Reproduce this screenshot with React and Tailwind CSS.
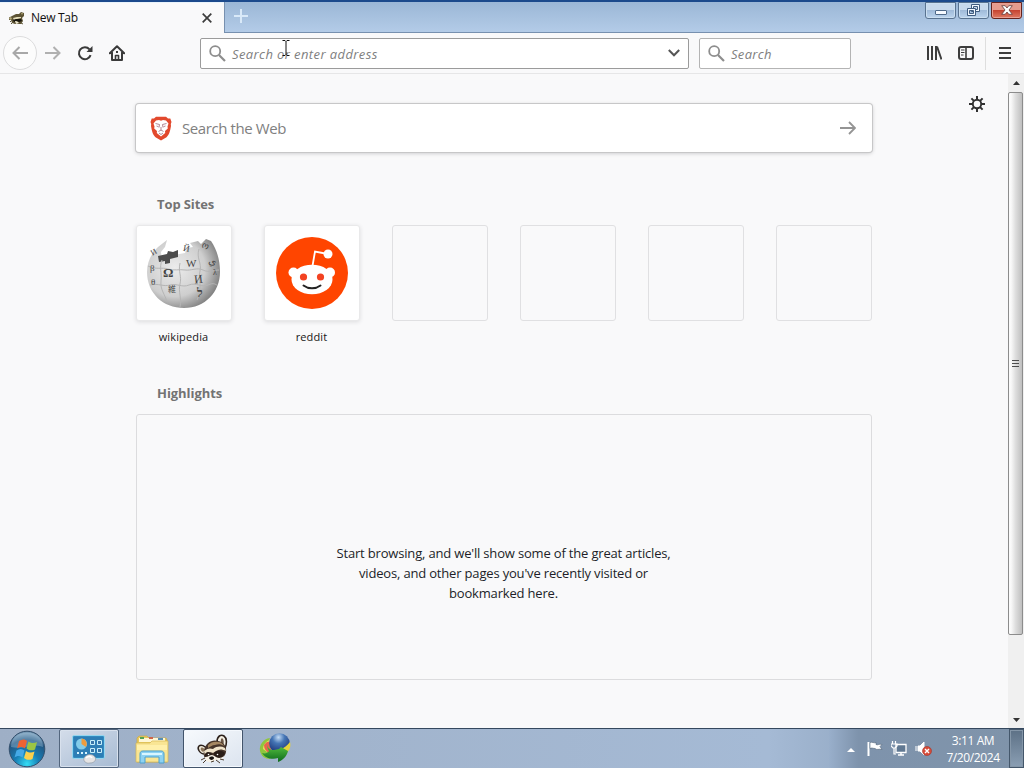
import React from "react";

const FONT = "font-['Open_Sans','Noto_Sans',sans-serif]";

function Raccoon({ className }) {
  return (
    <svg viewBox="0 0 34 30" className={className}>
      <path d="M21 8C21 2 25 0 28 2s3 8 1 12z" fill="#f3eee2" stroke="#2c211b" strokeWidth="1.600" />
      <path d="M25 9c-1-4 1-6 2-4s1 4 0 6z" fill="#6b5645" />
      <path d="M9 20C3 20 1 14 3 12s6 0 8 3z" fill="#efe8d8" stroke="#2c211b" strokeWidth="1.500" />
      <path d="M5 14c1-1 3 0 4 2l-2 2c-2-1-3-3-2-4z" fill="#8b7459" />
      <path d="M8 17C9 9 16 5 22 7c6 1 9 6 8 11-1 5-4 6-8 7l-9 1c-5-1-6-5-5-9z" fill="#46342a" />
      <path d="M12 11c3-3 7-4 10-3 3 0 5 2 6 4-3-2-6-2-9-1-3 0-5 2-7 3z" fill="#a58762" />
      <path d="M8 17c4-3 6-3 9-2 4-3 8-3 12-1l1 3c-4-2-7-2-10 0l-3 2c-3-1-6 0-8 2z" fill="#f0e4ca" />
      <path d="M9 20c2-3 6-2 7 0l-1 3-6 1zM18 19c3-3 8-3 11 0-1 3-4 5-7 5-2 0-4-2-4-5z" fill="#2a1d17" />
      <path d="M9 23c3 0 5-2 7-2s4 3 7 3c2 0 4-1 5-2-1 3-4 4-7 4l-7 2c-3 0-5-2-5-5z" fill="#f7f1e5" />
      <circle cx="12.500" cy="20.500" r=".8" fill="#fff" />
      <circle cx="21.500" cy="20.500" r=".8" fill="#fff" />
      <path d="M13 24c1-2 5-2 5 0s-4 3-5 0z" fill="#171210" />
      <path d="M9 24l-4 2M10 26l-3 3M20 26l4 3M24 25l4 1M15 28l3-1" stroke="#4a3a2c" strokeWidth="1" />
    </svg>
  );
}

function TabRaccoon() {
  return (
    <svg viewBox="0 0 16 14" className="h-[14px] w-[16px]">
      <path d="M3 5l4-2 3 0 2-2 3 1 0 3-2 2 1 3-2 3-3 0-3 0-3-1-1-3-2 0-1-2z" fill="#5c5334" />
      <path d="M0 7l2-1 1 2-2 1zM12 2l2 0-1 2z" fill="#b5ab78" />
      <path d="M4 7l4-1 4 0 0 1-4 1-3 1z" fill="#e6dfbd" />
      <path d="M4 9l3-1 5 0 1 2-3 1-2-1-3 1z" fill="#17150d" />
      <path d="M6 10l1 0 2 1 1 1-3 1z" fill="#eee8cf" />
      <path d="M2 10l-1 1M3 12l-1 1M12 12l2 1" stroke="#5c5334" />
    </svg>
  );
}

function Magnifier({ className }) {
  return (
    <svg viewBox="0 0 17 17" className={className} fill="none" stroke="#8d8d8d">
      <circle cx="6.2" cy="6.2" r="5" strokeWidth="1.8" />
      <path d="M10 10l6 6" strokeWidth="2.2" />
    </svg>
  );
}

function TitleBar() {
  return (
    <div className="flex h-[33px] shrink-0 border-t-2 border-[#1c4a8c] bg-linear-to-b from-[#9bb7d6] to-[#b4cce8]">
      <div className="flex h-[31px] w-[224px] items-center border-t border-[#e9f3fb] bg-[#f9f9fa] pr-[12px] pl-[9px]">
        <TabRaccoon />
        <span className="ml-[6px] text-[12px] leading-[16px] tracking-[-0.3px] text-[#111]">New Tab</span>
        <svg viewBox="0 0 10 10" className="ml-auto size-[10px]" stroke="#3c3c3c" strokeWidth="1.7">
          <path d="M.7.7l8.6 8.6M9.3.7L.7 9.3" />
        </svg>
      </div>
      <div className="flex h-[31px] flex-1 border-b border-l border-[#7790af]">
        <svg viewBox="0 0 14 14" className="mt-[7px] ml-[9px] size-[14px]" stroke="#d9e9f8" strokeWidth="2">
          <path d="M7 0v14M0 7h14" />
        </svg>
        <div className="ml-auto flex gap-[2px] pr-[2px]">
          <div className="flex h-[17px] w-[31px] items-center justify-center rounded-b-[3px] border border-[#597390] bg-linear-to-b from-[#c7d9ec] from-45% via-[#a0bbd9] via-50% to-[#bcd5ee] shadow-[inset_0_0_0_1px_#cbdff1]">
            <div className="mt-[4px] h-[5px] w-[12px] rounded-[1px] border border-[#4f6a89] bg-[#f6faff]" />
          </div>
          <div className="flex h-[17px] w-[31px] items-center justify-center rounded-b-[3px] border border-[#597390] bg-linear-to-b from-[#c7d9ec] from-45% via-[#a0bbd9] via-50% to-[#bcd5ee] shadow-[inset_0_0_0_1px_#cbdff1]">
            <svg viewBox="0 0 13 12" className="mb-px h-[12px] w-[13px]" fill="#f2f8ff" stroke="#405d80">
              <path d="M4.5.5h8v7h-8zM6.5 2.5h4v3h-4z" fillRule="evenodd" />
              <path d="M.5 4.5h8v7h-8zM2.5 6.5h4v3h-4z" fillRule="evenodd" />
            </svg>
          </div>
          <div className="flex h-[17px] w-[31px] items-center justify-center rounded-b-[3px] border border-[#66231d] bg-linear-to-b from-[#e69b8d] from-45% via-[#c64431] via-50% to-[#de7862] shadow-[inset_0_0_0_1px_#e99f92]">
            <svg viewBox="0 0 12 10" className="mb-px h-[10px] w-[12px]">
              <path d="M.7.7h3.500L6 3 7.800.7h3.500L8 5l3.300 4.300H7.800L6 7 4.200 9.300H.7L4 5z" fill="#fff" stroke="#663c3b" strokeWidth=".8" />
            </svg>
          </div>
        </div>
      </div>
    </div>
  );
}

function ToolBar() {
  return (
    <div className="flex h-[41px] shrink-0 items-center border-b border-[#e6e6e7] bg-[#f9f9fa] pl-[3px]">
      <div className="flex size-[34px] items-center justify-center rounded-full border border-[#dcdcdd] bg-[#fcfcfc]">
        <svg viewBox="0 0 16 14" className="h-[14px] w-[16px]" fill="none" stroke="#a8a8a8" strokeWidth="2">
          <path d="M16 7H1.500M7.500 1l-6 6 6 6" />
        </svg>
      </div>
      <svg viewBox="0 0 16 14" className="ml-[8px] h-[14px] w-[16px]" fill="none" stroke="#b0b0b0" strokeWidth="2">
        <path d="M0 7h14.500M8.500 1l6 6-6 6" />
      </svg>
      <svg viewBox="0 0 16 16" className="ml-[16px] size-[16px]" fill="none" stroke="#3a3a3a" strokeWidth="2">
        <path d="M13.600 10.200A6 6 0 1 1 12.500 4.300" />
        <path d="M15.500 1v6h-6z" fill="#3a3a3a" stroke="none" />
      </svg>
      <svg viewBox="0 0 16 16" className="ml-[16px] size-[16px]" fill="none" stroke="#3a3a3a" strokeWidth="2" strokeLinejoin="round">
        <path d="M.8 8.300L8 1.200l7.200 7.100M3 7.500V15h10V7.500" strokeLinecap="round" />
        <path d="M6.500 15v-4.500h3V15" strokeWidth="1.600" />
        <path d="M8 6v2" />
      </svg>
      <div className="relative ml-[75px] flex h-[31px] w-[489px] items-center rounded-[2px] border border-[#9b9b9b] bg-white pr-[8px] pl-[8px]">
        <Magnifier className="size-[17px]" />
        <span className="mt-[3px] ml-[6px] text-[13px] tracking-[0.4px] whitespace-nowrap text-[#808080] italic">Search or enter address</span>
        <svg viewBox="0 0 12 8" className="ml-auto h-[8px] w-[12px]" fill="none" stroke="#555" strokeWidth="2">
          <path d="M.8 1L6 6.300 11.200 1" />
        </svg>
        <svg viewBox="0 0 8 16" className="absolute top-[1px] left-[81px] h-[16px] w-[8px]" fill="none" stroke="#111">
          <path d="M.5.5h2.500l1 1 1-1h2.500M4 1.500v13M.5 15.500h2.500l1-1 1 1h2.500" />
        </svg>
      </div>
      <div className="ml-[10px] flex h-[31px] w-[152px] items-center rounded-[2px] border border-[#b4b4b4] bg-white pl-[8px]">
        <Magnifier className="size-[17px]" />
        <span className="mt-[3px] ml-[6px] text-[13px] tracking-[0.3px] text-[#808080] italic">Search</span>
      </div>
      <svg viewBox="0 0 16 14" className="ml-[75px] h-[14px] w-[16px]" stroke="#3d3d3d" strokeWidth="2">
        <path d="M2 0v14M6 0v14M10 0v14M11 .5L15.500 13.500" />
      </svg>
      <svg viewBox="0 0 16 14" className="ml-[16px] h-[14px] w-[16px]" fill="none" stroke="#3d3d3d">
        <rect x="1" y="1" width="14" height="12" rx="2" strokeWidth="2" />
        <path d="M8 1v12" strokeWidth="1.600" />
        <path d="M3 4h3.500M3 6.500h3.500M3 9h2.500" />
      </svg>
      <div className="ml-[11px] h-[33px] w-px bg-[#dedede]" />
      <svg viewBox="0 0 12 12" className="ml-[13px] h-[12px] w-[12px]" stroke="#3d3d3d" strokeWidth="2">
        <path d="M0 1h12M0 6h12M0 11h12" />
      </svg>
    </div>
  );
}

function Lion() {
  return (
    <svg viewBox="0 0 22 25" className="h-[25px] w-[22px]">
      <path d="M6 .8h10l2 1.800 2.300-.2L21.500 6l-.7 2 .2 2c-1 6-2 9-4.500 11.200L11 24.500l-5.500-3.300C3 19 2 16 1 10l.2-2L.5 6l1.200-3.600 2.300.2z" fill="#e2492d" />
      <path d="M6 4.500l3-.5 2 .7 2-.7 3 .5 2.500 3-1 3 .3 2-2.800 2.500.2 2L11 20.500 6.800 17l.2-2-2.800-2.500.3-2-1-3z" fill="#fff" />
      <path d="M5.500 7.500l4 1-.5 3M16.500 7.500l-4 1 .5 3M6.500 10l2 .7M15.500 10l-2 .7M11 11v3.500M8.500 15.500L11 14l2.500 1.500M9 17l2 1.500 2-1.500" fill="none" stroke="#aa7a88" strokeWidth=".9" />
    </svg>
  );
}

function WikiGlobe() {
  return (
    <svg viewBox="0 0 76 74" className="h-[74px] w-[76px]">
      <defs>
        <radialGradient id="globe" cx="38%" cy="42%" r="64%">
          <stop offset="0" stopColor="#ececec" />
          <stop offset=".65" stopColor="#cecece" />
          <stop offset="1" stopColor="#828282" />
        </radialGradient>
      </defs>
      <path d="M12 11l9-7-2 7-4 5 1 8 9-2 3-3 11-2 2-5 6-1-3-4 8-2 3 3 5-5 5 2c6 9 9 19 9 31C74 56 59 72 38 72S1 57 1 36c0-11 5-19 11-25z" fill="url(#globe)" />
      <path d="M12 20l9-2 1-3 5 1 5-2v7l-8 2v4l-5 1v-3l-6 1z" fill="#4c4c4c" />
      <path d="M2 30c8 4 14 1 20 3s11 0 17 1 12-3 18 0 11 0 16 0M4 49c9-2 13 2 20 0s12 3 19 0 13 3 19 0 8 0 9 0M16 24c-3 8 0 12-1 21s4 13 6 21M34 27c-2 9 2 13 0 21s2 14 0 23M53 13c-3 9 3 14 1 22s3 16-3 29" fill="none" stroke="#b5b5b5" strokeWidth="1" />
      <g fill="#444" fontFamily="Liberation Serif, serif">
        <text x="17" y="41" fontSize="13" fontWeight="700">Ω</text>
        <text x="40" y="31" fontSize="11">W</text>
        <text x="48" y="47" fontSize="12" transform="rotate(-6 52 42)">И</text>
        <text x="22" y="56" fontSize="8" fontFamily="Noto Sans CJK JP, sans-serif">維</text>
        <text x="51" y="61" fontSize="12" fontWeight="700">ל</text>
        <text x="64" y="27" fontSize="10" transform="rotate(20 64 20)">ي</text>
        <text x="37" y="15" fontSize="9" transform="rotate(10 38 14)">Й</text>
        <text x="6" y="20" fontSize="8" transform="rotate(-30 6 19)">И</text>
        <text x="4" y="35" fontSize="9">β</text>
        <text x="5" y="49" fontSize="9">θ</text>
        <text x="56" y="12" fontSize="9" transform="rotate(25 58 9)">ო</text>
        <text x="67" y="39" fontSize="8">λ</text>
      </g>
    </svg>
  );
}

function RedditLogo() {
  return (
    <svg viewBox="0 0 72 72" className="size-[72px]">
      <circle cx="36" cy="36" r="36" fill="#ff4500" />
      <path d="M36.500 29l2.500-14.500 13 2.500" fill="none" stroke="#fff" strokeWidth="1.800" />
      <circle cx="52" cy="17" r="4.500" fill="#fff" />
      <circle cx="17.500" cy="35.500" r="5" fill="#fff" />
      <circle cx="54" cy="35.500" r="5" fill="#fff" />
      <ellipse cx="36" cy="42.500" rx="20.500" ry="14.800" fill="#fff" />
      <circle cx="27.500" cy="40" r="3.600" fill="#f34221" />
      <circle cx="44.500" cy="40" r="3.600" fill="#f34221" />
      <path d="M27.500 48.500c5 3.800 12 3.800 17 0" fill="none" stroke="#242424" strokeWidth="2" strokeLinecap="round" />
    </svg>
  );
}

function Site({ name, children }) {
  return (
    <div className="flex w-[96px] flex-col items-center">
      <div
        className={
          children
            ? "flex size-[96px] items-center justify-center rounded-[3px] border border-[#e9e9ea] bg-white shadow-[0_1px_4px_#dcdcde]"
            : "size-[96px] rounded-[3px] border border-[#e0e0e2]"
        }
      >
        {children}
      </div>
      {name && <span className="mt-[8px] mr-px text-[11px] leading-[16px] tracking-[0.15px] text-[#171717]">{name}</span>}
    </div>
  );
}

function NewTabPage() {
  return (
    <div className="flex min-w-0 flex-1">
      <main className="ml-[136px] w-[736px] pt-[30px]">
        <div className="flex h-[48px] items-center rounded-[3px] bg-white pr-[16px] pl-[14px] shadow-[0_0_0_1px_#c7c7c8,0_1px_4px_#bdbdbf]">
          <Lion />
          <span className="ml-[10px] text-[15px] tracking-[-0.4px] text-[#808080]">Search the Web</span>
          <svg viewBox="0 0 16 14" className="ml-auto h-[14px] w-[16px]" fill="none" stroke="#949494" strokeWidth="1.800">
            <path d="M0 7h15M9 1l6 6-6 6" />
          </svg>
        </div>
        <h2 className="mt-[42px] ml-[21px] text-[13px] leading-[20px] font-bold tracking-[-0.1px] text-[#737373]">Top Sites</h2>
        <div className="mt-[11px] flex h-[120px] gap-[32px]">
          <Site name="wikipedia"><WikiGlobe /></Site>
          <Site name="reddit"><RedditLogo /></Site>
          <Site />
          <Site />
          <Site />
          <Site />
        </div>
        <h2 className="mt-[38px] ml-[21px] text-[13px] leading-[20px] font-bold tracking-[-0.05px] text-[#737373]">Highlights</h2>
        <div className="mt-[11px] flex h-[266px] justify-center rounded-[3px] border border-[#dcdcde] pt-[128px]">
          <p className="mr-px text-center text-[13px] leading-[20px] tracking-[-0.175px] whitespace-nowrap text-[#211e28]">
            Start browsing, and we'll show some of the great articles,<br />
            videos, and other pages you've recently visited or<br />
            bookmarked here.
          </p>
        </div>
      </main>
      <svg viewBox="0 0 16 16" className="mt-[22px] ml-[97px] size-[16px]" fill="none" stroke="#303030">
        <circle cx="8" cy="8" r="4.200" strokeWidth="1.900" />
        <path d="M8 0v3.500M8 12.500V16M0 8h3.500M12.500 8H16M2.400 2.400l2.500 2.500M11.100 11.100l2.500 2.500M13.600 2.400l-2.500 2.500M4.900 11.100l-2.500 2.500" strokeWidth="2" />
      </svg>
    </div>
  );
}

function ScrollBar() {
  return (
    <div className="flex w-[16px] flex-col bg-[#f0f0f0]">
      <div className="flex h-[18px] items-center justify-center">
        <svg viewBox="0 0 7 4" className="h-[4px] w-[7px]"><path d="M0 4l3.500-4L7 4z" fill="#333" /></svg>
      </div>
      <div className="flex h-[543px] w-[15px] items-center justify-center rounded-[2px] border border-[#8c8c8c] bg-linear-to-r from-[#fafafa] from-15% via-[#dedede] via-50% to-[#bfbfbf]">
        <div className="mr-px flex flex-col gap-[2px]">
          <div className="h-px w-[7px] bg-[#4d4d4d]" />
          <div className="h-px w-[7px] bg-[#4d4d4d]" />
          <div className="h-px w-[7px] bg-[#4d4d4d]" />
        </div>
      </div>
      <div className="mt-auto flex h-[17px] items-center justify-center">
        <svg viewBox="0 0 7 4" className="h-[4px] w-[7px]"><path d="M0 0l3.500 4L7 0z" fill="#333" /></svg>
      </div>
    </div>
  );
}

function StartOrb() {
  return (
    <svg viewBox="0 0 38 38" className="size-[38px]">
      <defs>
        <radialGradient id="orb" cx="50%" cy="92%" r="85%">
          <stop offset="0" stopColor="#35ddf5" />
          <stop offset=".4" stopColor="#177eb5" />
          <stop offset=".8" stopColor="#235681" />
          <stop offset="1" stopColor="#6d92b0" />
        </radialGradient>
      </defs>
      <circle cx="19" cy="19" r="17.800" fill="url(#orb)" stroke="#34506d" strokeWidth="1" />
      <path d="M3 17C3 8 10 2.500 19 2.500S35 8 35 17c-9-4-21 3-32 0z" fill="#d9efff" opacity=".28" />
      <path d="M11 11c3-2 6-2 8 0l-2 7.500c-3-2-5-2-8 0z" fill="#ed6332" />
      <path d="M20.500 11.500c3 2 6 2 8.500.5l-2 7.500c-3 1.500-6 1-8.500-1z" fill="#9bc544" />
      <path d="M8.500 20.500c3-2 5.500-2 8 0l-2 7c-3-2-5-2-8 0z" fill="#45a9e6" />
      <path d="M18 21c3 2 5.500 2 8.500.5l-2 7.500c-3 1.500-6 1-8.500-1z" fill="#fbd04c" />
    </svg>
  );
}

function ControlPanel() {
  return (
    <svg viewBox="0 0 33 29" className="h-[29px] w-[33px]">
      <rect x=".5" y=".5" width="32" height="23" rx="1.500" fill="#318bc1" stroke="#93d5ee" />
      <rect x="2" y="2" width="29" height="20" fill="#2d7eb5" />
      <circle cx="9.500" cy="9" r="5.500" fill="#83cce9" />
      <path d="M9.500 9V3.500A5.500 5.500 0 0 1 14 12z" fill="#ee9c3d" />
      <path d="M5 18h2M9 18h2M13 18h2" stroke="#d6f5ff" strokeWidth="2" />
      <g fill="#3976aa" stroke="#c6f0fb">
        <path d="M18.500 5.500h4v4h-4zM25.500 5.500h4v4h-4zM18.500 13.500h4v4h-4zM25.500 13.500h4v4h-4z" />
      </g>
      <path d="M12 23c2-4 8-5 11-1 2 3-1 6-5 6-4 1-7-2-6-5z" fill="#e5e4e4" stroke="#929ba5" strokeWidth=".7" />
      <path d="M14 23c2-2 5-2 6 0" fill="none" stroke="#fff" strokeWidth="1.500" />
    </svg>
  );
}

function Folder() {
  return (
    <svg viewBox="0 0 34 30" className="h-[30px] w-[34px]">
      <path d="M2 3l2-2h8l2 2h17l1 2v22H2z" fill="#e7c95e" stroke="#c8a749" strokeWidth=".7" />
      <path d="M4 3h26v4H4z" fill="#fff7d5" />
      <path d="M5 2h4v2H5z" fill="#54a356" />
      <path d="M14 2h4v2h-4z" fill="#ce644a" />
      <path d="M23 3h5v2h-5z" fill="#578fb4" />
      <path d="M1 8h14l2-2h16v21H1z" fill="#f9e594" stroke="#d5b754" strokeWidth=".7" />
      <path d="M2 10h30v5H2z" fill="#fff0ab" />
      <path d="M5 28V19c0-2 1-3 3-3h18c2 0 3 1 3 3v9h-5v-6H10v6z" fill="#8ed2f1" stroke="#4ca0ce" />
      <path d="M7 19h20" stroke="#d9f6ff" strokeWidth="2" />
    </svg>
  );
}

function DownloadGlobe() {
  return (
    <svg viewBox="0 0 32 30" className="h-[30px] w-[32px]">
      <defs>
        <radialGradient id="blueball" cx="45%" cy="20%" r="75%">
          <stop offset="0" stopColor="#c4dcf5" />
          <stop offset=".4" stopColor="#4475b5" />
          <stop offset="1" stopColor="#1c3478" />
        </radialGradient>
        <linearGradient id="arrow" x1="0" y1="0" x2="0" y2="1">
          <stop offset="0" stopColor="#5cc843" />
          <stop offset="1" stopColor="#0d6a1c" />
        </linearGradient>
      </defs>
      <path d="M11 5C4 6 0 12 1 18c1 5 5 8 10 8l3-5-6-4c0-4 1-8 3-12z" fill="#8fc63d" />
      <path d="M11 7c-4 1-7 5-7 9l4 3c0-4 1-8 3-12z" fill="#e2e15a" />
      <path d="M5 12c2-3 4-4 6-3l1 8-2 3c-3-2-5-4-5-8z" fill="#e8654e" />
      <circle cx="20.500" cy="10.500" r="10.300" fill="url(#blueball)" />
      <path d="M31 9c1 4 0 8-3 10l-6-2c3-3 6-4 9-8z" fill="#e6d23c" />
      <path d="M9 11c-1 4 2 6 6 6l5-1 2-2 7 4c-1 5-5 9-10 11v-4c-6 2-13 0-16-5 3 1 6 0 7-2-2-2-2-5-1-7z" fill="url(#arrow)" />
    </svg>
  );
}

function TaskBar() {
  return (
    <div className="flex h-[40px] shrink-0 border-t border-[#35485e] bg-linear-to-r from-[#9eafc6] via-[#a5bad5] via-75% to-[#7990aa]">
      <div className="flex h-[39px] w-[58px] items-center pl-[8px]"><StartOrb /></div>
      <div className="mr-[5px] ml-px flex h-[39px] w-[60px] items-center justify-center rounded-[2px] border border-[#53667e] bg-linear-to-br from-[#d4ddea] to-[#a7bbd3] pt-px pr-px shadow-[inset_0_0_0_1px_#d8e1ed]">
        <ControlPanel />
      </div>
      <div className="flex h-[39px] w-[59px] items-center justify-center pt-[3px] pr-[4px]"><Folder /></div>
      <div className="flex h-[39px] w-[60px] items-center justify-center rounded-[2px] border border-[#42546b] bg-linear-to-br from-[#f7fafd] to-[#dce4ef] shadow-[inset_0_0_0_1px_#f4f8fd]">
        <Raccoon className="h-[30px] w-[34px]" />
      </div>
      <div className="flex h-[39px] w-[64px] items-center justify-center pr-px pb-[2px]"><DownloadGlobe /></div>
      <div className="ml-auto flex w-[195px] bg-linear-to-r from-[#99afcb] from-0% via-[#7e93ac] via-15% to-[#8094aa]">
        <svg viewBox="0 0 8 4" className="mt-[19px] ml-[18px] h-[4px] w-[8px]"><path d="M0 4l4-4 4 4z" fill="#fff" /></svg>
        <svg viewBox="0 0 16 16" className="mt-[12px] ml-[12px] size-[16px]">
          <path d="M1.500 1v14" stroke="#fff" strokeWidth="2" />
          <path d="M3 1.500c2-1 4 1 6 0v2c2 1 3-1 6 0l-2 2 2 3c-3-1-5 1-7-1-2 0-3-1-5 0z" fill="#fff" stroke="#536579" strokeWidth=".6" />
        </svg>
        <svg viewBox="0 0 16 15" className="mt-[12px] ml-[8px] h-[15px] w-[16px]" fill="none" stroke="#fff">
          <path d="M5 3.500h10v8H5z" fill="#607892" strokeWidth="1.300" />
          <path d="M7 14h6M10 12v2" strokeWidth="1.500" />
          <path d="M1.500 0v2.500M4.500 0v2.500M0 3h6v2L4 7H2L0 5zM3 7v6h2" strokeWidth="1.200" />
        </svg>
        <svg viewBox="0 0 17 15" className="mt-[12px] ml-[8px] h-[15px] w-[17px]">
          <path d="M1 5v5M3 5h2l4-4v13l-4-4H3z" fill="#fff" stroke="#fff" />
          <circle cx="12" cy="10" r="4.500" fill="#d74c39" stroke="#a83429" strokeWidth=".6" />
          <path d="M10 8l4 4M14 8l-4 4" stroke="#fff" strokeWidth="1.400" />
        </svg>
        <div className="mr-[9px] ml-auto flex w-[54px] flex-col items-center pt-[3px] text-[12px] leading-[17px] tracking-[-0.4px] whitespace-nowrap text-white">
          <span>3:11 AM</span>
          <span>7/20/2024</span>
        </div>
        <div className="w-[15px] border border-[#44576b] bg-linear-to-b from-[#5d7186] to-[#8b9fb4] shadow-[inset_0_0_0_1px_#8496a8]" />
      </div>
    </div>
  );
}

export default function App() {
  return (
    <div className={`flex h-[768px] w-[1024px] flex-col overflow-hidden bg-[#f9f9fa] ${FONT}`}>
      <TitleBar />
      <ToolBar />
      <div className="flex min-h-0 flex-1">
        <NewTabPage />
        <ScrollBar />
      </div>
      <TaskBar />
    </div>
  );
}
